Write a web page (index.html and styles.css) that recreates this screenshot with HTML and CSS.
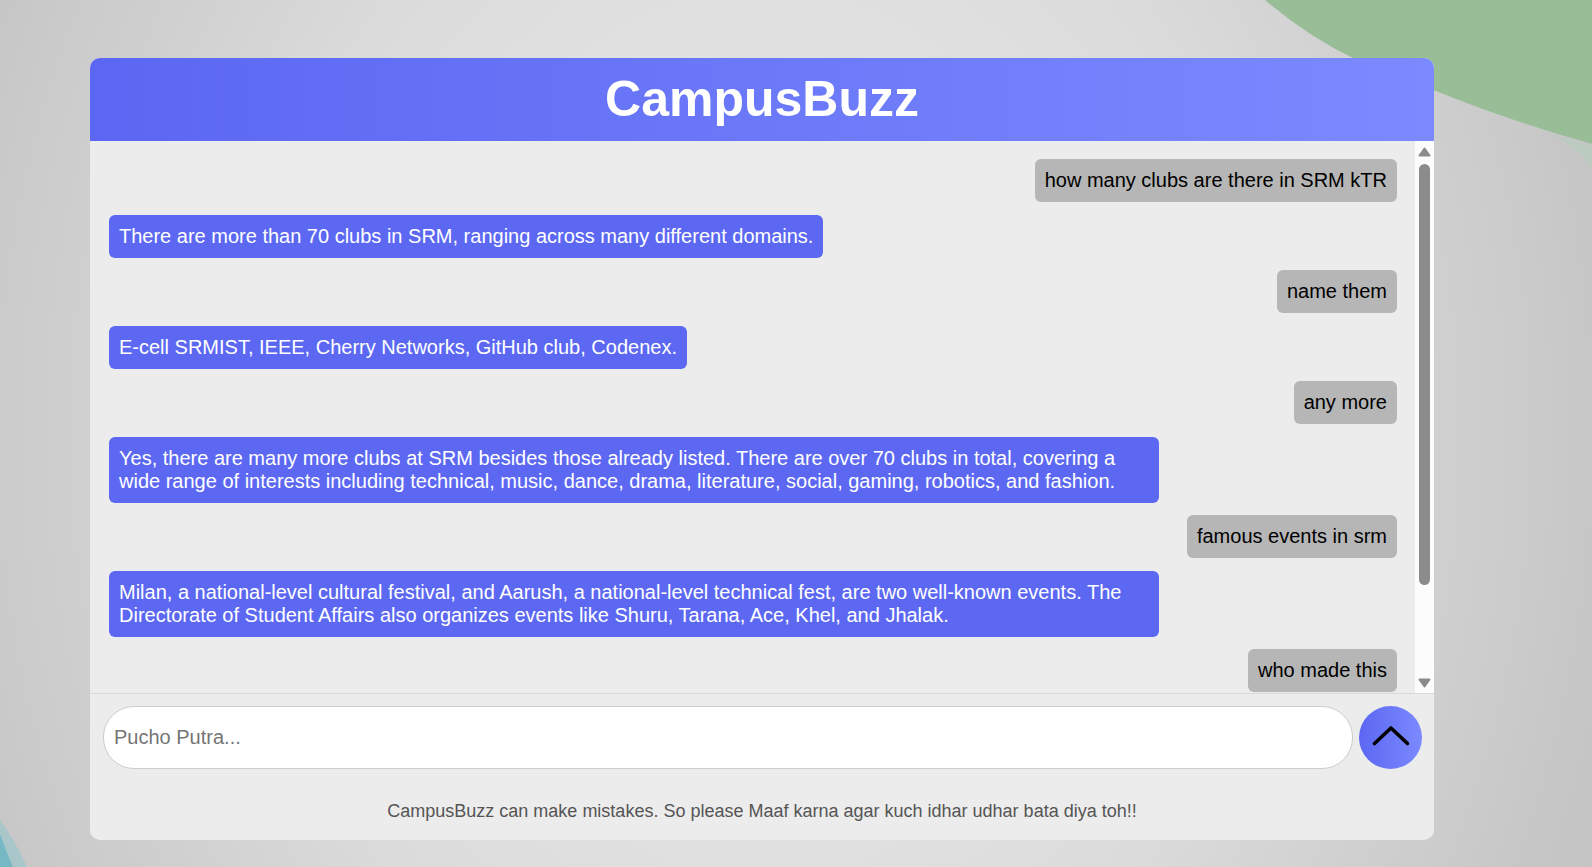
FILE: index.html
```html
<!DOCTYPE html>
<html lang="en">
<head>
<meta charset="utf-8">
<meta name="viewport" content="width=device-width, initial-scale=1">
<title>CampusBuzz</title>
<link rel="stylesheet" href="styles.css">
</head>
<body class="page">
<svg class="blob blob-top" width="332" height="180" viewBox="0 0 332 180" aria-hidden="true">
  <path d="M290 134L332 146V168Q314 144 290 134Z" fill="#bccbbf"/>
  <path d="M5 0Q50 38 97 60Q135 78 176 91Q250 121 332 144V0Z" fill="#98bd97"/>
</svg>
<svg class="blob blob-bottom" width="30" height="50" viewBox="0 0 30 50" aria-hidden="true">
  <path d="M0 3Q16 25 27 50H0Z" fill="#a9c6cb"/>
  <path d="M0 17Q6 34 13 50H0Z" fill="#76b8c3"/>
</svg>
<main class="chat">
  <header class="chat-header"><h1 class="chat-title">CampusBuzz</h1></header>
  <div class="chat-body">
    <div class="messages">
      <p class="message user">how many clubs are there in SRM kTR</p>
      <p class="message bot">There are more than 70 clubs in SRM, ranging across many different domains.</p>
      <p class="message user">name them</p>
      <p class="message bot">E-cell SRMIST, IEEE, Cherry Networks, GitHub club, Codenex.</p>
      <p class="message user">any more</p>
      <p class="message bot">Yes, there are many more clubs at SRM besides those already listed. There are over 70 clubs in total, covering a wide range of interests including technical, music, dance, drama, literature, social, gaming, robotics, and fashion.</p>
      <p class="message user">famous events in srm</p>
      <p class="message bot">Milan, a national-level cultural festival, and Aarush, a national-level technical fest, are two well-known events. The Directorate of Student Affairs also organizes events like Shuru, Tarana, Ace, Khel, and Jhalak.</p>
      <p class="message user">who made this</p>
    </div>
    <div class="scrollbar" aria-hidden="true">
      <svg class="scroll-arrow" width="13" height="10" viewBox="0 0 13 10"><path d="M6.5 1.5L11.5 8.5H1.5Z"/></svg>
      <div class="scroll-track"><div class="scroll-thumb"></div></div>
      <svg class="scroll-arrow" width="13" height="10" viewBox="0 0 13 10"><path d="M6.5 8.5L11.5 1.5H1.5Z"/></svg>
    </div>
  </div>
  <form class="composer">
    <input class="composer-input" type="text" aria-label="Message" placeholder="Pucho Putra...">
    <button class="send" type="button" aria-label="Send">
      <svg width="40" height="24" viewBox="0 0 40 24" aria-hidden="true"><path d="M3.500 19.500L20 4L36.500 19.500" fill="none" stroke="#000" stroke-width="3.600" stroke-linecap="round" stroke-linejoin="round"/></svg>
    </button>
  </form>
  <p class="notice">CampusBuzz can make mistakes. So please Maaf karna agar kuch idhar udhar bata diya toh!!</p>
</main>
</body>
</html>
```
FILE: styles.css
```css
.page {
  box-sizing: border-box;
  display: flex;
  height: 100vh;
  margin: 0;
  padding: 58px 158px 27px 90px;
  overflow: hidden;
  font-family: "Liberation Sans", Arial, sans-serif;
  font-size: 20px;
  line-height: 23px;
  background: radial-gradient(ellipse 66% 150% at 48% 50%, #e6e6e6 0%, #e0e0e0 33%, #dbdbdb 48%, #d1d1d1 63%, #cbcbcb 73%, #c6c6c6 80%, #c0c0c0 100%);
}

.blob {
  position: absolute;
}

.blob-top {
  top: 0;
  right: 0;
}

.blob-bottom {
  bottom: 0;
  left: 0;
}

.chat {
  position: relative;
  display: flex;
  flex: 1;
  flex-direction: column;
  min-width: 0;
  overflow: hidden;
  border-radius: 10px;
  background: #ececec;
}

.chat-header {
  padding: 13px 20px;
  color: #fff;
  text-align: center;
  background: linear-gradient(to right, #5b67f2, #7b8aff);
}

.chat-title {
  margin: 0;
  font-size: 50px;
  line-height: 57px;
}

.chat-body {
  display: flex;
  flex: 1;
  min-height: 0;
}

.messages {
  display: flex;
  flex: 1;
  flex-direction: column;
  min-width: 0;
  padding: 18px 18px 0 19px;
  overflow-y: auto;
  scrollbar-width: none;
}

.message {
  flex: none;
  max-width: 80%;
  margin: 0;
  padding: 10px;
  border-radius: 6px;
}

.user {
  align-self: flex-end;
  margin-bottom: 13px;
  color: #000;
  background: #b6b6b6;
}

.bot {
  align-self: flex-start;
  margin-bottom: 12px;
  color: #fff;
  background: #5c68f2;
}

.scrollbar {
  box-sizing: border-box;
  display: flex;
  flex: none;
  flex-direction: column;
  align-items: center;
  gap: 7px;
  width: 19px;
  padding: 6px 0 5px;
  background: #fcfcfc;
}

.scroll-arrow {
  flex: none;
  fill: #8b8b8b;
  stroke: #8b8b8b;
  stroke-width: 2px;
  stroke-linejoin: round;
}

.scroll-track {
  flex: 1;
  width: 11px;
}

.scroll-thumb {
  height: 83%;
  border-radius: 6px;
  background: #8b8b8b;
}

.composer {
  display: flex;
  gap: 6px;
  padding: 12px 12px 12px 13px;
  border-top: 1px solid #dadada;
}

.composer-input {
  box-sizing: border-box;
  flex: 1;
  min-width: 0;
  height: 63px;
  padding: 10px;
  border: 1px solid #ccc;
  border-radius: 31px;
  font: inherit;
  background: #fff;
}

.composer-input::placeholder {
  color: #757575;
}

.send {
  display: flex;
  align-items: center;
  justify-content: center;
  width: 63px;
  height: 63px;
  padding: 0 0 4px;
  border: 0;
  border-radius: 50%;
  background: linear-gradient(to right, #5b67f2, #7b8aff);
}

.notice {
  margin: 0;
  padding: 20px 20px 19px;
  color: #555;
  font-size: 18px;
  line-height: 20px;
  text-align: center;
}
```
